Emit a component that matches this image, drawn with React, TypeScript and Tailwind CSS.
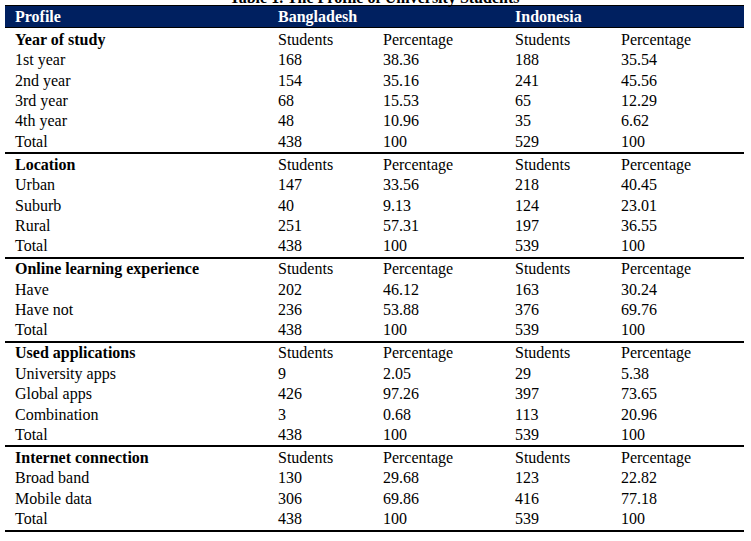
import React from "react";

type Row = [string, string, string, string, string];
type Group = { title: string; rows: Row[] };

const groups: Group[] = [
  {
    title: "Year of study",
    rows: [
      ["1st year", "168", "38.36", "188", "35.54"],
      ["2nd year", "154", "35.16", "241", "45.56"],
      ["3rd year", "68", "15.53", "65", "12.29"],
      ["4th year", "48", "10.96", "35", "6.62"],
      ["Total", "438", "100", "529", "100"],
    ],
  },
  {
    title: "Location",
    rows: [
      ["Urban", "147", "33.56", "218", "40.45"],
      ["Suburb", "40", "9.13", "124", "23.01"],
      ["Rural", "251", "57.31", "197", "36.55"],
      ["Total", "438", "100", "539", "100"],
    ],
  },
  {
    title: "Online learning experience",
    rows: [
      ["Have", "202", "46.12", "163", "30.24"],
      ["Have not", "236", "53.88", "376", "69.76"],
      ["Total", "438", "100", "539", "100"],
    ],
  },
  {
    title: "Used applications",
    rows: [
      ["University apps", "9", "2.05", "29", "5.38"],
      ["Global apps", "426", "97.26", "397", "73.65"],
      ["Combination", "3", "0.68", "113", "20.96"],
      ["Total", "438", "100", "539", "100"],
    ],
  },
  {
    title: "Internet connection",
    rows: [
      ["Broad band", "130", "29.68", "123", "22.82"],
      ["Mobile data", "306", "69.86", "416", "77.18"],
      ["Total", "438", "100", "539", "100"],
    ],
  },
];

const gridCls =
  "grid grid-cols-[263px_105px_132px_106px_1fr] pl-[10px] h-[20.4px] leading-[20.4px] items-center whitespace-nowrap";

export default function App() {
  return (
    <div
      className="w-[751px] h-[541px] overflow-hidden bg-white text-black text-[16px]"
      style={{ fontFamily: '"Liberation Serif", "Times New Roman", serif' }}
    >
      <div className="-mt-[11px] h-[16px] leading-[18px] text-center font-bold pr-[2px]">
        Table 1. The Profile of University Students
      </div>
      <div className="ml-[5px] w-[739px]">
        <div className="grid grid-cols-[263px_237px_1fr] pl-[10px] h-[23px] border-y border-black bg-[#002060] text-white font-bold leading-[21px] whitespace-nowrap">
          <div>Profile</div>
          <div>Bangladesh</div>
          <div>Indonesia</div>
        </div>
        <div className="pt-[1.8px]">
          {groups.map((g, gi) => (
            <div
              key={g.title}
              className={`border-b-2 border-black ${gi > 0 ? "pt-[0.6px]" : ""}`}
            >
              <div className={gridCls}>
                <div className="font-bold">{g.title}</div>
                <div>Students</div>
                <div>Percentage</div>
                <div>Students</div>
                <div>Percentage</div>
              </div>
              {g.rows.map((r, ri) => (
                <div key={ri} className={gridCls}>
                  {r.map((c, ci) => (
                    <div key={ci}>{c}</div>
                  ))}
                </div>
              ))}
            </div>
          ))}
        </div>
      </div>
    </div>
  );
}
